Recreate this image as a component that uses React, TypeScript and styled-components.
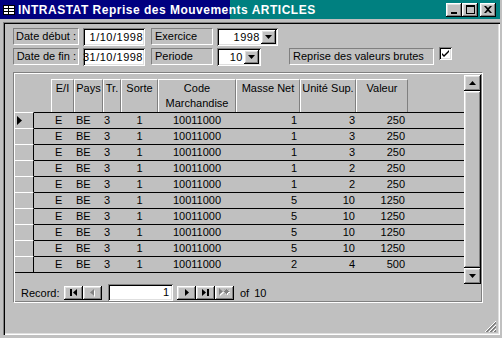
import React from "react";
import styled, { createGlobalStyle, css } from "styled-components";

const GlobalStyle = createGlobalStyle`
  html, body { margin: 0; padding: 0; background: #c0c0c0; }
  body {
    font-family: "Liberation Sans", Arial, sans-serif;
    font-size: 11px;
    color: #000;
  }
  * { box-sizing: border-box; }
`;

const raised = css`
  background: #c0c0c0;
  box-shadow: inset -1px -1px #000, inset 1px 1px #fff, inset -2px -2px #808080,
    inset 2px 2px #dfdfdf;
`;

const sunkenField = css`
  background: #fff;
  box-shadow: inset 1px 1px #808080, inset -1px -1px #fff, inset 2px 2px #000,
    inset -2px -2px #dfdfdf;
`;

const Window = styled.div`
  position: relative;
  width: 502px;
  height: 338px;
  background: #c0c0c0;
  overflow: hidden;
  display: flex;
  flex-direction: column;
`;

const TitleBar = styled.div`
  height: 19px;
  width: 500px;
  display: flex;
  align-items: center;
  padding: 0 4px 0 3px;
  background: linear-gradient(to right, #000080 0, #000080 230px, #008080 230px);
  color: #fff;
`;

const TitleText = styled.span`
  flex: 1;
  margin-left: 3px;
  font-weight: bold;
  font-size: 12px;
  letter-spacing: 0.5px;
  white-space: nowrap;
`;

const TitleButtons = styled.div`
  display: flex;
`;

const TitleButton = styled.div<{ $gap?: boolean }>`
  ${raised};
  width: 16px;
  height: 14px;
  margin-left: ${(p) => (p.$gap ? "2px" : "0")};
  display: flex;
  align-items: center;
  justify-content: center;
`;

const Client = styled.div`
  margin: 3px 0 0 3px;
  width: 497px;
  height: 313px;
  position: relative;
  box-shadow: inset 1px 1px #808080, inset 2px 2px #000, inset -1px -1px #fff,
    inset -2px -2px #dfdfdf;
  padding: 6px 0 0 10px;
  display: flex;
  flex-direction: column;
`;

const FormRow = styled.div<{ $top?: number }>`
  display: flex;
  align-items: flex-start;
  height: 18px;
  margin-top: ${(p) => p.$top ?? 0}px;
`;

const Label = styled.div<{ $w: number; $right?: boolean; $mr: number }>`
  width: ${(p) => p.$w}px;
  height: 17px;
  margin-right: ${(p) => p.$mr}px;
  line-height: 15px;
  padding: 0 ${(p) => (p.$right ? "2px" : "0")} 0 ${(p) => (p.$right ? "0" : "3px")};
  text-align: ${(p) => (p.$right ? "right" : "left")};
  border: 1px solid;
  border-color: #808080 #fff #fff #808080;
  white-space: nowrap;
  overflow: hidden;
`;

const TextBox = styled.div<{ $w: number; $mr: number }>`
  ${sunkenField};
  width: ${(p) => p.$w}px;
  height: 18px;
  margin-right: ${(p) => p.$mr}px;
  line-height: 18px;
  padding-right: 2px;
  text-align: right;
  letter-spacing: 0.5px;
  white-space: nowrap;
  overflow: hidden;
  direction: rtl;
`;

const Combo = styled.div<{ $w: number; $mr?: number }>`
  ${sunkenField};
  width: ${(p) => p.$w}px;
  height: 18px;
  margin-right: ${(p) => p.$mr ?? 0}px;
  display: flex;
  align-items: center;
  padding: 2px;
`;

const ComboValue = styled.span`
  flex: 1;
  text-align: right;
  line-height: 14px;
  padding-right: 1px;
  letter-spacing: 0.5px;
`;

const ComboButton = styled.div`
  ${raised};
  width: 15px;
  height: 14px;
  display: flex;
  align-items: center;
  justify-content: center;
`;

const CheckBox = styled.div`
  ${sunkenField};
  width: 13px;
  height: 13px;
  margin-top: -1px;
  display: flex;
  align-items: center;
  justify-content: center;
`;

const SubForm = styled.div`
  margin-top: 6px;
  width: 470px;
  height: 231px;
  border: 1px solid;
  border-color: #808080 #fff #fff #808080;
  box-shadow: inset 1px 1px #fff, inset -1px -1px #808080;
  padding: 1px;
  display: flex;
  flex-direction: column;
`;

const SubBody = styled.div`
  display: flex;
  height: 210px;
`;

const FormArea = styled.div`
  width: 449px;
  display: flex;
  flex-direction: column;
`;

const HeaderRow = styled.div`
  height: 38px;
  display: flex;
  align-items: flex-start;
  padding: 5px 0 0 36px;
`;

const HeaderCell = styled.div<{ $w: number }>`
  width: ${(p) => p.$w}px;
  height: 33px;
  border: 1px solid;
  border-color: #fff #808080 #808080 #fff;
  border-bottom: none;
  text-align: center;
  line-height: 15px;
  padding-top: 1px;
  white-space: pre-line;
`;

const Detail = styled.div`
  border-bottom: 1px solid #000;
`;

const Row = styled.div`
  display: flex;
  height: 16px;
`;

const Selector = styled.div`
  width: 19px;
  height: 16px;
  border-top: 1px solid #fff;
  border-right: 1px solid #000;
  display: flex;
  align-items: center;
  padding-left: 2px;
`;

const RowData = styled.div`
  flex: 1;
  display: flex;
  border-top: 1px solid #000;
  padding-left: 17px;
`;

const Cell = styled.div<{ $w: number; $align: string; $pad: number }>`
  width: ${(p) => p.$w}px;
  line-height: 15px;
  text-align: ${(p) => p.$align};
  padding-left: ${(p) => (p.$align === "left" ? p.$pad : 0)}px;
  padding-right: ${(p) => (p.$align === "right" ? p.$pad : 0)}px;
  white-space: nowrap;
`;

const ScrollBar = styled.div`
  width: 17px;
  height: 209px;
  margin-top: 1px;
  display: flex;
  flex-direction: column;
`;

const ScrollButton = styled.div`
  ${raised};
  height: 16px;
  display: flex;
  align-items: center;
  justify-content: center;
`;

const ScrollThumb = styled.div`
  ${raised};
  flex: 1;
`;

const NavBar = styled.div`
  height: 17px;
  display: flex;
  align-items: center;
  padding-left: 6px;
`;

const NavLabel = styled.span`
  width: 43px;
`;

const NavButton = styled.div<{ $mr?: number }>`
  ${raised};
  width: 19px;
  height: 14px;
  margin-right: ${(p) => p.$mr ?? 0}px;
  display: flex;
  align-items: center;
  justify-content: center;
`;

const NavField = styled.div`
  ${sunkenField};
  width: 65px;
  height: 17px;
  margin-right: 4px;
  text-align: right;
  line-height: 17px;
  padding-right: 4px;
`;

const NavCount = styled.span`
  margin-left: 6px;
  word-spacing: 2px;
`;

const Grip = styled.svg`
  position: absolute;
  right: 3px;
  bottom: 2px;
`;

const columns = [
  { title: "E/I", w: 23, align: "left", pad: 4 },
  { title: "Pays", w: 29, align: "left", pad: 2 },
  { title: "Tr.", w: 18, align: "left", pad: 1 },
  { title: "Sorte", w: 37, align: "center", pad: 0 },
  { title: "Code\nMarchandise", w: 78, align: "center", pad: 0 },
  { title: "Masse Net", w: 64, align: "right", pad: 3 },
  { title: "Unité Sup.", w: 56, align: "right", pad: 1 },
  { title: "Valeur", w: 52, align: "right", pad: 3 },
];

const rows = [
  ["1", "3", "250"],
  ["1", "3", "250"],
  ["1", "3", "250"],
  ["1", "2", "250"],
  ["1", "2", "250"],
  ["5", "10", "1250"],
  ["5", "10", "1250"],
  ["5", "10", "1250"],
  ["5", "10", "1250"],
  ["2", "4", "500"],
].map((r) => ["E", "BE", "3", "1", "10011000", ...r]);

const DownArrow = () => (
  <svg width="7" height="4" viewBox="0 0 7 4">
    <polygon points="0,0 7,0 3.5,4" fill="#000" />
  </svg>
);

const UpArrow = () => (
  <svg width="7" height="4" viewBox="0 0 7 4">
    <polygon points="0,4 7,4 3.5,0" fill="#000" />
  </svg>
);

const FormIcon = () => (
  <svg width="12" height="10" viewBox="0 0 12 10">
    <rect x="0.5" y="0.5" width="11" height="9" fill="#fff" stroke="#000" />
    <line x1="1" y1="3.5" x2="11" y2="3.5" stroke="#000" />
    <line x1="1" y1="6.5" x2="11" y2="6.5" stroke="#000" />
    <line x1="5.5" y1="1" x2="5.5" y2="9" stroke="#000" />
  </svg>
);

export default function App() {
  return (
    <>
      <GlobalStyle />
      <Window>
        <TitleBar>
          <FormIcon />
          <TitleText>INTRASTAT Reprise des Mouvements ARTICLES</TitleText>
          <TitleButtons>
            <TitleButton>
              <svg width="8" height="8" viewBox="0 0 8 8">
                <rect x="1" y="6" width="6" height="2" fill="#000" />
              </svg>
            </TitleButton>
            <TitleButton>
              <svg width="9" height="9" viewBox="0 0 9 9">
                <rect x="0.5" y="0.5" width="8" height="8" fill="none" stroke="#000" />
                <rect x="0" y="0" width="9" height="2" fill="#000" />
              </svg>
            </TitleButton>
            <TitleButton $gap>
              <svg width="8" height="7" viewBox="0 0 8 7">
                <path
                  d="M0 0h2l2 2l2-2h2l-3 3.5l3 3.5h-2l-2-2l-2 2h-2l3-3.5z"
                  fill="#000"
                />
              </svg>
            </TitleButton>
          </TitleButtons>
        </TitleBar>

        <Client>
          <FormRow>
            <Label $w={66} $right $mr={4}>
              Date début :
            </Label>
            <TextBox $w={62} $mr={6}>
              1/10/1998
            </TextBox>
            <Label $w={62} $mr={4}>
              Exercice
            </Label>
            <Combo $w={61}>
              <ComboValue>1998</ComboValue>
              <ComboButton>
                <DownArrow />
              </ComboButton>
            </Combo>
          </FormRow>
          <FormRow $top={2}>
            <Label $w={66} $right $mr={4}>
              Date de fin :
            </Label>
            <TextBox $w={62} $mr={6}>
              31/10/1998
            </TextBox>
            <Label $w={62} $mr={4}>
              Periode
            </Label>
            <Combo $w={44} $mr={28}>
              <ComboValue>10</ComboValue>
              <ComboButton>
                <DownArrow />
              </ComboButton>
            </Combo>
            <Label $w={145} $mr={5}>
              Reprise des valeurs brutes
            </Label>
            <CheckBox>
              <svg width="9" height="9" viewBox="0 0 9 9">
                <path d="M1 4l2 2l5-5v2l-5 5l-2-2z" fill="#000" />
              </svg>
            </CheckBox>
          </FormRow>

          <SubForm>
            <SubBody>
              <FormArea>
                <HeaderRow>
                  {columns.map((c) => (
                    <HeaderCell key={c.title} $w={c.w}>
                      {c.title}
                    </HeaderCell>
                  ))}
                </HeaderRow>
                <Detail>
                  {rows.map((r, i) => (
                    <Row key={i}>
                      <Selector>
                        {i === 0 && (
                          <svg width="6" height="9" viewBox="0 0 6 9">
                            <polygon points="0,0 5,4.5 0,9" fill="#000" />
                          </svg>
                        )}
                      </Selector>
                      <RowData>
                        {r.map((v, j) => (
                          <Cell
                            key={j}
                            $w={columns[j].w}
                            $align={columns[j].align}
                            $pad={columns[j].pad}
                          >
                            {v}
                          </Cell>
                        ))}
                      </RowData>
                    </Row>
                  ))}
                </Detail>
              </FormArea>
              <ScrollBar>
                <ScrollButton>
                  <UpArrow />
                </ScrollButton>
                <ScrollThumb />
                <ScrollButton>
                  <DownArrow />
                </ScrollButton>
              </ScrollBar>
            </SubBody>
            <NavBar>
              <NavLabel>Record:</NavLabel>
              <NavButton>
                <svg width="7" height="7" viewBox="0 0 7 7">
                  <rect x="0" y="0" width="2" height="7" fill="#000" />
                  <polygon points="7,0 3,3.5 7,7" fill="#000" />
                </svg>
              </NavButton>
              <NavButton $mr={6}>
                <svg width="5" height="8" viewBox="0 0 5 8">
                  <polygon points="4,0 0,3.5 4,7" fill="#fff" transform="translate(1,1)" />
                  <polygon points="4,0 0,3.5 4,7" fill="#808080" />
                </svg>
              </NavButton>
              <NavField>1</NavField>
              <NavButton>
                <svg width="4" height="7" viewBox="0 0 4 7">
                  <polygon points="0,0 4,3.5 0,7" fill="#000" />
                </svg>
              </NavButton>
              <NavButton>
                <svg width="7" height="7" viewBox="0 0 7 7">
                  <polygon points="0,0 4,3.5 0,7" fill="#000" />
                  <rect x="5" y="0" width="2" height="7" fill="#000" />
                </svg>
              </NavButton>
              <NavButton>
                <svg width="11" height="9" viewBox="0 0 11 9">
                  <g transform="translate(1,1)" fill="#fff" stroke="#fff">
                    <polygon points="0,0 4,3.5 0,7" stroke="none" />
                    <path d="M7.5 1v5M5 3.5h5M5.7 1.7l3.6 3.6M9.3 1.7l-3.6 3.6" />
                  </g>
                  <g fill="#808080" stroke="#808080">
                    <polygon points="0,0 4,3.5 0,7" stroke="none" />
                    <path d="M7.5 1v5M5 3.5h5M5.7 1.7l3.6 3.6M9.3 1.7l-3.6 3.6" />
                  </g>
                </svg>
              </NavButton>
              <NavCount>of 10</NavCount>
            </NavBar>
          </SubForm>

          <Grip width="12" height="12" viewBox="0 0 12 12">
            <path d="M11 1L1 11M11 5L5 11M11 9L9 11" stroke="#808080" strokeWidth="1" />
            <path d="M11 2L2 11M11 6L6 11M11 10L10 11" stroke="#808080" strokeWidth="1" />
            <path d="M11 0L0 11M11 4L4 11M11 8L8 11" stroke="#fff" strokeWidth="1" />
          </Grip>
        </Client>
      </Window>
    </>
  );
}
